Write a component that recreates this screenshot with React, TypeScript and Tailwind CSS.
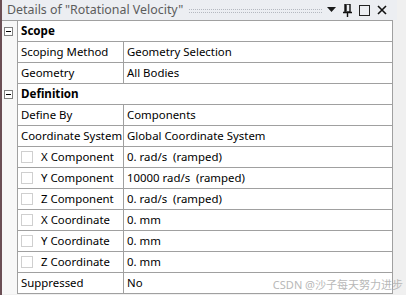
import { ReactNode } from "react";

type Row =
  | { kind: "cat"; label: string }
  | { kind: "prop"; label: string; value: string; check?: boolean };

const rows: Row[] = [
  { kind: "cat", label: "Scope" },
  { kind: "prop", label: "Scoping Method", value: "Geometry Selection" },
  { kind: "prop", label: "Geometry", value: "All Bodies" },
  { kind: "cat", label: "Definition" },
  { kind: "prop", label: "Define By", value: "Components" },
  { kind: "prop", label: "Coordinate System", value: "Global Coordinate System" },
  { kind: "prop", label: "X Component", value: "0. rad/s  (ramped)", check: true },
  { kind: "prop", label: "Y Component", value: "10000 rad/s  (ramped)", check: true },
  { kind: "prop", label: "Z Component", value: "0. rad/s  (ramped)", check: true },
  { kind: "prop", label: "X Coordinate", value: "0. mm", check: true },
  { kind: "prop", label: "Y Coordinate", value: "0. mm", check: true },
  { kind: "prop", label: "Z Coordinate", value: "0. mm", check: true },
  { kind: "prop", label: "Suppressed", value: "No" },
];

const font = { fontFamily: '"Noto Sans", "Noto Sans CJK SC", sans-serif' };

function MinusBox() {
  return (
    <div className="w-[9px] h-[9px] border border-[#808080] bg-white flex items-center justify-center">
      <div className="w-[5px] h-px bg-black" />
    </div>
  );
}

function Gutter({ children }: { children?: ReactNode }) {
  return (
    <div className="w-[15px] shrink-0 flex items-center pl-[2px] bg-[#f7f7f7]">
      {children}
    </div>
  );
}

function TitleBar() {
  return (
    <div className="h-[20px] flex items-center bg-[#eceef2] pl-[5px] pr-[10px] w-[395px]">
      <span className="text-[12.4px] text-[#5c5c5c] whitespace-nowrap leading-none">
        Details of "Rotational Velocity"
      </span>
      <div className="flex-1 flex flex-col gap-[2px] ml-[6px] mr-[5px] mt-[1px]">
        <div className="border-t border-dotted border-[#b4b8c0]" />
        <div className="border-t border-dotted border-[#b4b8c0]" />
      </div>
      <div className="flex items-center gap-[7px]">
        <svg width="9" height="6" viewBox="0 0 9 6">
          <path d="M0 0h9L4.5 5z" fill="#1a1a1a" />
        </svg>
        <svg width="9" height="13" viewBox="0 0 9 13">
          <path d="M2 0h5v8H2z M3 1v6 M0 8.5h9 M4.5 9v4" fill="none" stroke="#111" strokeWidth="1.4" />
        </svg>
        <div className="w-[11px] h-[11px] border-[1.5px] border-[#222]" />
        <svg width="10" height="10" viewBox="0 0 10 10">
          <path d="M1 1l8 8M9 1l-8 8" stroke="#111" strokeWidth="1.6" />
        </svg>
      </div>
    </div>
  );
}

function Checkbox() {
  return <div className="w-[12px] h-[12px] border border-[#cfcfcf] bg-white shrink-0" />;
}

export default function App() {
  return (
    <div className="w-[406px] h-[295px] overflow-hidden flex bg-[#f0f0f0] relative" style={font}>
      <div className="w-[2px] shrink-0 bg-[#6b4f55]" />
      <div className="flex flex-col">
        <TitleBar />
        <div className="w-[391px] border-t border-r border-[#a0a0a0] bg-white">
          {rows.map((row) =>
            row.kind === "cat" ? (
              <div key={row.label} className="flex h-[21px]">
                <Gutter>
                  <MinusBox />
                </Gutter>
                <div className="flex-1 flex items-center border-l border-b border-[#a0a0a0] pl-[3px] text-[11.6px] font-bold text-black">
                  {row.label}
                </div>
              </div>
            ) : (
              <div key={row.label} className="flex h-[21px]">
                <Gutter />
                <div className="flex-1 flex border-l border-b border-[#a0a0a0] text-[11.4px] text-black">
                  <div className="w-[106px] shrink-0 flex items-center gap-[8px] pl-[3px] border-r border-[#a0a0a0] whitespace-nowrap">
                    {row.check && <Checkbox />}
                    {row.label}
                  </div>
                  <div className="flex-1 flex items-center pl-[3px] whitespace-pre">
                    {row.value}
                  </div>
                </div>
              </div>
            )
          )}
        </div>
      </div>
      <div className="absolute right-[3px] bottom-[5px] text-[11px] text-[#b8b8b8] leading-none whitespace-nowrap">
        CSDN @沙子每天努力进步
      </div>
    </div>
  );
}
